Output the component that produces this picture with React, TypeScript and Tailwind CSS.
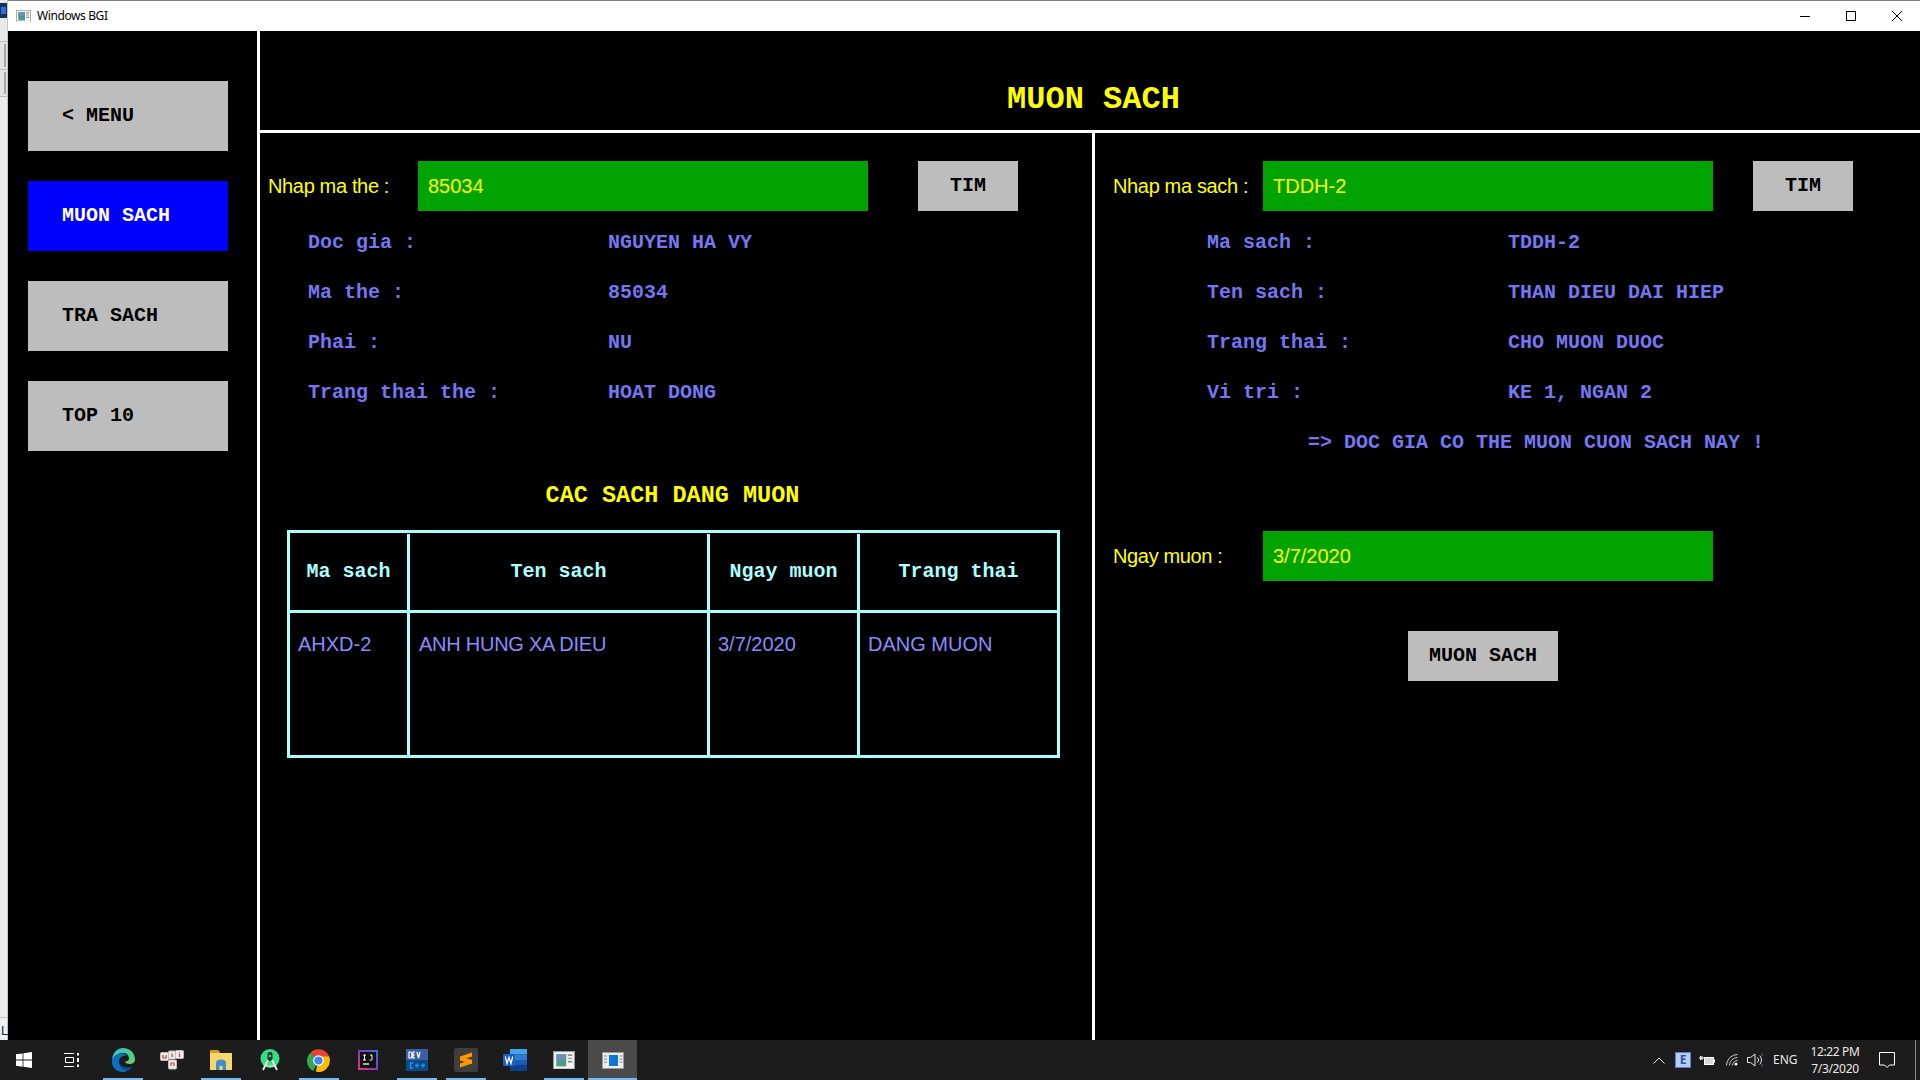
import React from 'react';

const mono = "font-['Liberation_Mono','Courier_New',monospace] font-bold";
const sans = "font-['Liberation_Sans',Arial,sans-serif]";
const ui = "font-['Noto_Sans','Open_Sans',sans-serif]";

function AppIcon({ size = 16 }: { size?: number }) {
  return (
    <svg width={size} height={size * 0.85} viewBox="0 0 20 17">
      <rect x="0.5" y="0.5" width="19" height="16" fill="#f4f4f4" stroke="#9a9a9a" />
      <rect x="3" y="3" width="9" height="11" fill="#4f9a90" />
      <rect x="3" y="3" width="9" height="5" fill="#6f8fb5" />
      <rect x="13.5" y="3" width="4" height="1.5" fill="#888" />
      <rect x="13.5" y="6" width="4" height="1.5" fill="#aaa" />
      <rect x="13.5" y="9" width="4" height="1.5" fill="#888" />
    </svg>
  );
}

function WindowButtons() {
  return (
    <div className="flex h-full">
      <div className="w-[46px] flex items-center justify-center">
        <svg width="10" height="10" viewBox="0 0 10 10"><path d="M0 5.5h10" stroke="#000" /></svg>
      </div>
      <div className="w-[46px] flex items-center justify-center">
        <svg width="10" height="10" viewBox="0 0 10 10"><rect x="0.5" y="0.5" width="9" height="9" fill="none" stroke="#000" /></svg>
      </div>
      <div className="w-[46px] flex items-center justify-center">
        <svg width="10" height="10" viewBox="0 0 10 10"><path d="M0 0l10 10M10 0L0 10" stroke="#000" /></svg>
      </div>
    </div>
  );
}

function SideButton({ label, active }: { label: string; active?: boolean }) {
  return (
    <div
      className={`w-[200px] h-[70px] flex items-center pl-[34px] pb-[1px] text-[20px] leading-none whitespace-pre ${mono} ${
        active ? 'bg-[#0000ff] text-white' : 'bg-[#bdbdbd] text-black'
      }`}
    >
      {label}
    </div>
  );
}

function GrayButton({ label, width }: { label: string; width: string }) {
  return (
    <div className={`${width} h-[50px] bg-[#bdbdbd] text-black flex items-center justify-center pb-[1px] text-[20px] leading-none shrink-0 ${mono}`}>
      {label}
    </div>
  );
}

function InputBox({ value }: { value: string }) {
  return (
    <div className={`w-[450px] h-[50px] bg-[#00a300] text-[#ffff00] flex items-center pl-[10px] text-[20px] leading-none shrink-0 ${sans}`}>
      {value}
    </div>
  );
}

function FieldLabel({ text }: { text: string }) {
  return (
    <div className={`w-[150px] -ml-px text-[20px] leading-none tracking-[-0.35px] text-[#ffff00] whitespace-nowrap ${sans}`}>
      {text}
    </div>
  );
}

function InfoRow({ label, value, labelWidth }: { label: string; value: string; labelWidth: string }) {
  return (
    <div className={`h-[50px] flex items-center text-[20px] leading-none text-[#7676f2] whitespace-pre ${mono}`}>
      <div className={labelWidth}>{label}</div>
      <div>{value}</div>
    </div>
  );
}

function BorrowTable() {
  return (
    <div className="w-[773px] h-[228px] border-[3px] border-[#aaffff] flex flex-col">
      <div className={`h-[80px] flex pt-[1px] border-b-[3px] border-[#aaffff] text-[#aaffff] text-[20px] leading-none ${mono}`}>
        <div className="w-[120px] flex items-center justify-center border-r-[3px] border-[#aaffff]">Ma sach</div>
        <div className="w-[300px] flex items-center justify-center border-r-[3px] border-[#aaffff]">Ten sach</div>
        <div className="w-[150px] flex items-center justify-center border-r-[3px] border-[#aaffff]">Ngay muon</div>
        <div className="flex-1 flex items-center justify-center">Trang thai</div>
      </div>
      <div className={`flex-1 flex text-[#8a8aff] text-[20px] leading-none ${sans}`}>
        <div className="w-[120px] pl-[8px] pt-[21px] border-r-[3px] border-[#aaffff]">AHXD-2</div>
        <div className="w-[300px] pl-[9px] pt-[21px] tracking-[-0.25px] border-r-[3px] border-[#aaffff]">ANH HUNG XA DIEU</div>
        <div className="w-[150px] pl-[8px] pt-[21px] border-r-[3px] border-[#aaffff]">3/7/2020</div>
        <div className="flex-1 pl-[8px] pt-[21px]">DANG MUON</div>
      </div>
    </div>
  );
}

function TaskButton({ children, running, active }: { children: React.ReactNode; running?: boolean; active?: boolean }) {
  return (
    <div className={`w-[49px] h-full flex flex-col items-center ${active ? 'bg-[#4a4a4a]' : ''}`}>
      <div className="h-[38px] pt-[2px] w-full flex items-center justify-center">{children}</div>
      <div className={`h-[2px] ${active ? 'w-full' : 'w-10'} ${running || active ? 'bg-[#76b9ed]' : ''}`} />
    </div>
  );
}

function Taskbar() {
  return (
    <div className="h-10 bg-[#1c1c1c] flex items-stretch shrink-0">
      <div className="w-12 flex items-center justify-center">
        <svg width="16" height="16" viewBox="0 0 16 16" fill="#fff">
          <path d="M0 2.3l6.6-.9v6.2H0zM7.4 1.3L16 0v7.6H7.4zM0 8.4h6.6v6.3L0 13.7zM7.4 8.4H16V16l-8.6-1.2z" />
        </svg>
      </div>
      <div className="w-[50px] flex items-center justify-center pr-[2px]">
        <svg width="16" height="16" viewBox="0 0 16 16" fill="none" stroke="#fff">
          <path d="M0 1.5h10M0 14.5h10M1.5 5.5h8v5h-8z" />
          <path d="M14 1v2.5M14 6v4M14 12.5V15" strokeWidth="2" />
        </svg>
      </div>
      <TaskButton running>
        <svg width="24" height="24" viewBox="0 0 24 24">
          <defs>
            <linearGradient id="edgeA" x1="0" y1="0" x2="1" y2="1">
              <stop offset="0" stopColor="#2fc3d8" />
              <stop offset="1" stopColor="#63d25a" />
            </linearGradient>
          </defs>
          <path d="M12 0c7 0 12 5 12 11.5 0 3-2.500 4.500-5.500 4.500-2.500 0-4.500-1-4.500-2.500 3 0 4-1.500 4-3C18 7 15.500 5 12 5 7 5 3 8 1 12 1.500 5 6 0 12 0z" fill="url(#edgeA)" />
          <path d="M1 12c2-4 6-6.500 10-6.500 2.500 0 4 1 5 2.500-4.500-1-8 1.500-8 6 0 4.500 4 8 9 8.500-1.500.8-3.200 1.500-5 1.500C5 24 0 18.500 1 12z" fill="#0c6fc0" />
          <path d="M8 14c0 4.500 4 8 9 8.500 2-1 3.500-2.500 4.500-4-3 1.500-7 1.500-9.500 0C9.500 17 8.300 15.500 8 14z" fill="#0b4f9a" />
        </svg>
      </TaskButton>
      <TaskButton>
        <svg width="24" height="20" viewBox="0 0 24 20">
          <rect x="0.500" y="2.500" width="8" height="8" rx="1" fill="#ececec" stroke="#bbb" />
          <rect x="8.500" y="1" width="7" height="8" rx="1" fill="#ececec" stroke="#bbb" />
          <rect x="15.500" y="0.500" width="8" height="8" rx="1" fill="#ececec" stroke="#bbb" />
          <rect x="8.500" y="10" width="8" height="9" rx="1" fill="#ececec" stroke="#bbb" />
          <path d="M3 5v3h3V5M12 3.500v3.500M19.500 2v.8M19.500 3.800V7M11 16v-3h3v3" fill="none" stroke="#d23b3b" strokeWidth="1.200" />
        </svg>
      </TaskButton>
      <TaskButton running>
        <svg width="22" height="20" viewBox="0 0 22 20">
          <path d="M0 0h8l2 2v3H0z" fill="#d8a020" />
          <path d="M0 3h22v17H0z" fill="#f7d66a" />
          <path d="M6 13c0-2 1.500-3.500 5-3.500S16 11 16 13v7H6z" fill="#3a8fd0" />
          <path d="M9.500 16h3v4h-3z" fill="#f7d66a" />
        </svg>
      </TaskButton>
      <TaskButton>
        <svg width="20" height="22" viewBox="0 0 20 22">
          <circle cx="10" cy="9.500" r="9.500" fill="#3ddc84" />
          <rect x="7.500" y="3" width="5" height="9" rx="2" fill="#0b3d2a" />
          <circle cx="10" cy="7" r="1.200" fill="#3ddc84" />
          <path d="M8 11l-5 10M12 11l5 10" stroke="#e8e8e8" strokeWidth="1.800" />
          <path d="M4 17h12" stroke="#e8e8e8" />
        </svg>
      </TaskButton>
      <TaskButton running>
        <svg width="23" height="23" viewBox="0 0 24 24">
          <path d="M12 12L3.500 3.800A12 12 0 0 1 23 7.500H12z" fill="#ea4335" />
          <path d="M12 12l-5.500 11A12 12 0 0 1 3.500 3.800z" fill="#34a853" />
          <path d="M12 7.500h11A12 12 0 0 1 9 23.600L12 12z" fill="#fbbc05" />
          <circle cx="12" cy="12" r="5.500" fill="#fff" />
          <circle cx="12" cy="12" r="4.300" fill="#4285f4" />
        </svg>
      </TaskButton>
      <TaskButton>
        <svg width="20" height="20" viewBox="0 0 20 20">
          <defs>
            <linearGradient id="ijA" x1="0" y1="1" x2="1" y2="0">
              <stop offset="0" stopColor="#f0307a" />
              <stop offset="0.500" stopColor="#8a3ab8" />
              <stop offset="1" stopColor="#2a7de0" />
            </linearGradient>
          </defs>
          <rect width="20" height="20" fill="url(#ijA)" />
          <rect x="2" y="2" width="16" height="16" fill="#111" />
          <path d="M5 5h3M6.500 5v5M5 10h3M12 5h2v4.500c0 1-1.500 1-2.500.3" fill="none" stroke="#fff" />
          <path d="M5 14h6" stroke="#fff" strokeWidth="1.300" />
        </svg>
      </TaskButton>
      <TaskButton running>
        <svg width="22" height="22" viewBox="0 0 22 22">
          <rect width="22" height="12" fill="#3d5fa8" />
          <rect y="11" width="22" height="11" fill="#0c4a8a" />
          <path d="M3 3v6h1.500c2 0 2-6 0-6zM9 3H7v6h2M7 6h1.700M11 3l1.500 6L14 3" fill="none" stroke="#fff" strokeWidth="1.200" />
          <path d="M7 14H4.500v5H7M11 14.500v4M9 16.500h4M17 14.500v4M15 16.500h4" fill="none" stroke="#1f9bea" strokeWidth="1.300" />
        </svg>
      </TaskButton>
      <TaskButton running>
        <svg width="24" height="24" viewBox="0 0 24 24">
          <rect width="24" height="24" rx="2" fill="#3f3f3f" />
          <path d="M18 4.500v4L6 12.500v-4zM6 8.500l12 3.500v4L6 12.500zM18 11.500v4L6 19.500v-4z" fill="#ff9800" />
        </svg>
      </TaskButton>
      <TaskButton>
        <svg width="24" height="22" viewBox="0 0 24 22">
          <path d="M7 0h17v5.500H7z" fill="#41a5ee" />
          <path d="M7 5.500h17V11H7z" fill="#2b7cd3" />
          <path d="M7 11h17v5.500H7z" fill="#185abd" />
          <path d="M7 16.500h17V22H7z" fill="#103f91" />
          <rect x="0" y="5" width="12" height="12" rx="1" fill="#1a5ec0" />
          <path d="M2.300 7.500l1.700 7 2-6 2 6 1.700-7" fill="none" stroke="#fff" strokeWidth="1.200" />
        </svg>
      </TaskButton>
      <TaskButton running>
        <AppIcon size={22} />
      </TaskButton>
      <TaskButton active>
        <svg width="22" height="17" viewBox="0 0 22 17">
          <rect x="0.500" y="0.500" width="21" height="16" fill="#eeeeee" stroke="#9a9a9a" />
          <rect x="7" y="3" width="9" height="11" fill="#0f78d4" />
          <path d="M2 4h3M2 7h3M2 10h3M17.500 4h3M17.500 7h3M17.500 10h3" stroke="#888" />
        </svg>
      </TaskButton>

      <div className="flex-1" />

      <div className={`flex items-center text-[#e8e8e8] ${ui}`}>
        <svg width="12" height="7" viewBox="0 0 12 7" fill="none" stroke="#e8e8e8">
          <path d="M0.500 6.500L6 1l5.500 5.500" />
        </svg>
        <div className="ml-[10px] w-4 h-4 bg-[#b8ccf0] border border-[#5a7fd0] flex items-center justify-center text-[12px] leading-none text-[#3050b0] font-bold">
          E
        </div>
        <svg className="ml-2" width="16" height="12" viewBox="0 0 16 12" fill="none" stroke="#fff">
          <rect x="5.500" y="3.500" width="9" height="7" fill="#d8d8d8" />
          <path d="M15.500 5.500v3M0 4h5M1.500 2v4M3 2v4" />
        </svg>
        <svg className="ml-[11px]" width="12" height="12" viewBox="0 0 12 12" fill="none" stroke="#c8c8c8">
          <path d="M0.500 11.500A11 11 0 0 1 11.500 0.500M3.500 11.500A8 8 0 0 1 11.500 3.500M6.500 11.500a5 5 0 0 1 5-5" />
          <circle cx="10" cy="10" r="1.500" fill="#fff" stroke="none" />
        </svg>
        <svg className="ml-[9px]" width="16" height="14" viewBox="0 0 16 14" fill="none" stroke="#e8e8e8">
          <path d="M0.500 4.500h3L8 1v12L3.500 9.500h-3z" />
          <path d="M10.500 4.500a3.500 3.500 0 0 1 0 5M12.800 2.500a7 7 0 0 1 0 9" />
          <path d="M14.800 0.500a10 10 0 0 1 0 13" stroke="#777" />
        </svg>
        <div className="ml-[10px] w-[24px] text-[12px] leading-none whitespace-nowrap">ENG</div>
        <div className="ml-[12px] w-[52px] flex flex-col items-center text-[12px] leading-[17px] tracking-[-0.35px]">
          <div className="whitespace-nowrap">12:22 PM</div>
          <div className="whitespace-nowrap">7/3/2020</div>
        </div>
        <svg className="ml-[18px]" width="16" height="17" viewBox="0 0 16 17" fill="none" stroke="#fff">
          <path d="M0.500 0.500h15v12.500h-5L8 15.500 5.500 13h-5z" />
        </svg>
        <div className="ml-5 w-px h-full bg-[#8a8a8a]" />
        <div className="w-1 h-full" />
      </div>
    </div>
  );
}

// sliver of the window behind, visible left of the BGI window
function BackgroundSliver() {
  return (
    <div className={`w-2 shrink-0 bg-[#ececec] border-r border-[#c4c4c4] flex flex-col ${sans}`}>
      <div className="h-[3px] bg-[#e8e8e8]" />
      <div className="h-[15px] bg-[#16305c] flex items-center justify-center">
        <div className="w-[5px] h-[7px] bg-[#2f6fd0]" />
      </div>
      <div className="h-6 bg-[#e8e8e8] border-b border-[#bdbdbd]" />
      <div className="h-[28px] bg-[#e4e4e4] border-b border-[#bdbdbd] pl-[4px] py-[2px]">
        <div className="w-[2px] h-full bg-[#a8a8a8]" />
      </div>
      <div className="h-[27px] bg-[#e4e4e4] border-b border-[#bdbdbd] pl-[4px] py-[2px]">
        <div className="w-[2px] h-full bg-[#a8a8a8]" />
      </div>
      <div className="flex-1 bg-[#ececec]" />
      <div className="h-[23px] bg-[#f0f0f0] border-t border-[#c4c4c4] pt-[6px] pl-[1px] text-[13px] leading-none text-[#1a2a50]">
        L
      </div>
    </div>
  );
}

export default function App() {
  return (
    <div className="w-[1920px] h-[1080px] flex flex-col bg-black overflow-hidden">
      <div className="flex-1 flex min-h-0">
        <BackgroundSliver />

        <div className="flex-1 flex flex-col min-w-0">
          {/* title bar */}
          <div className="h-[31px] bg-white border-t border-[#808080] flex items-center justify-between shrink-0">
            <div className="flex items-center pl-2">
              <AppIcon size={15} />
              <span className={`ml-[6px] text-[12px] leading-none tracking-[-0.4px] text-black ${ui}`}>Windows BGI</span>
            </div>
            <WindowButtons />
          </div>

          <div className="flex-1 flex min-h-0">
            {/* menu */}
            <div className="w-[249px] shrink-0 flex flex-col gap-[30px] pt-[50px] pl-5">
              <SideButton label="< MENU" />
              <SideButton label="MUON SACH" active />
              <SideButton label="TRA SACH" />
              <SideButton label="TOP 10" />
            </div>
            <div className="w-[3px] bg-white shrink-0" />

            <div className="flex-1 flex flex-col min-w-0">
              <div className={`h-[99px] flex items-center justify-center pt-[39px] pl-[7px] text-[32px] leading-none text-[#ffff00] shrink-0 ${mono}`}>
                MUON SACH
              </div>
              <div className="h-[3px] bg-white shrink-0" />

              <div className="flex-1 flex min-h-0">
                {/* reader side */}
                <div className="w-[832px] shrink-0 pt-[28px] pl-[9px]">
                  <div className="flex items-center">
                    <FieldLabel text="Nhap ma the :" />
                    <InputBox value="85034" />
                    <div className="w-[50px]" />
                    <GrayButton label="TIM" width="w-[100px]" />
                  </div>
                  <div className="pl-[39px] pt-[7px]">
                    <InfoRow label="Doc gia :" value="NGUYEN HA VY" labelWidth="w-[300px]" />
                    <InfoRow label="Ma the :" value="85034" labelWidth="w-[300px]" />
                    <InfoRow label="Phai :" value="NU" labelWidth="w-[300px]" />
                    <InfoRow label="Trang thai the :" value="HOAT DONG" labelWidth="w-[300px]" />
                  </div>
                  <div className={`pt-[66px] text-center text-[23.5px] leading-[23px] text-[#ffff00] ${mono}`}>
                    <div className="w-[807px]">CAC SACH DANG MUON</div>
                  </div>
                  <div className="pl-[18px] pt-[23px]">
                    <BorrowTable />
                  </div>
                </div>
                <div className="w-[3px] bg-white shrink-0" />

                {/* book side */}
                <div className="flex-1 pt-[28px] pl-[19px] min-w-0">
                  <div className="flex items-center">
                    <FieldLabel text="Nhap ma sach :" />
                    <InputBox value="TDDH-2" />
                    <div className="w-10" />
                    <GrayButton label="TIM" width="w-[100px]" />
                  </div>
                  <div className="pl-[93px] pt-[7px]">
                    <InfoRow label="Ma sach :" value="TDDH-2" labelWidth="w-[301px]" />
                    <InfoRow label="Ten sach :" value="THAN DIEU DAI HIEP" labelWidth="w-[301px]" />
                    <InfoRow label="Trang thai :" value="CHO MUON DUOC" labelWidth="w-[301px]" />
                    <InfoRow label="Vi tri :" value="KE 1, NGAN 2" labelWidth="w-[301px]" />
                    <div className="pl-[101px]">
                      <InfoRow label="=> DOC GIA CO THE MUON CUON SACH NAY !" value="" labelWidth="" />
                    </div>
                  </div>
                  <div className="flex items-center pt-[63px]">
                    <FieldLabel text="Ngay muon :" />
                    <InputBox value="3/7/2020" />
                  </div>
                  <div className="pt-[50px] pl-[294px]">
                    <GrayButton label="MUON SACH" width="w-[150px]" />
                  </div>
                </div>
              </div>
            </div>
          </div>
        </div>
      </div>

      <Taskbar />
    </div>
  );
}
